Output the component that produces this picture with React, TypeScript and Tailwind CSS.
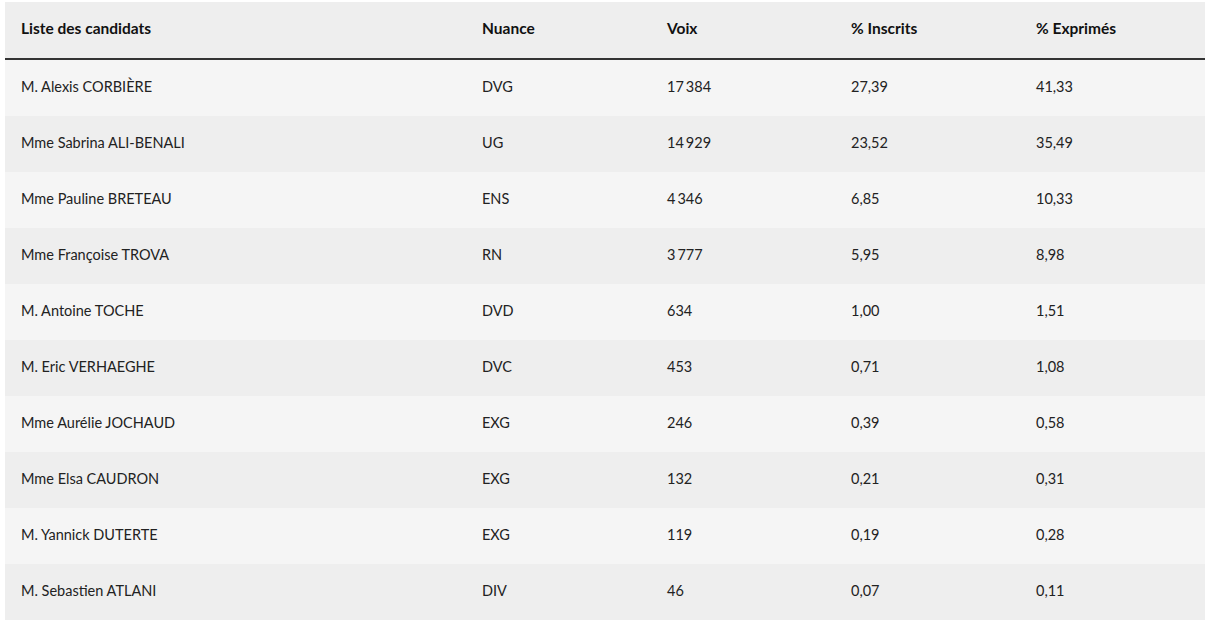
const rows = [
  ['M. Alexis CORBIÈRE', 'DVG', ['17', '384'], '27,39', '41,33'],
  ['Mme Sabrina ALI-BENALI', 'UG', ['14', '929'], '23,52', '35,49'],
  ['Mme Pauline BRETEAU', 'ENS', ['4', '346'], '6,85', '10,33'],
  ['Mme Françoise TROVA', 'RN', ['3', '777'], '5,95', '8,98'],
  ['M. Antoine TOCHE', 'DVD', ['634'], '1,00', '1,51'],
  ['M. Eric VERHAEGHE', 'DVC', ['453'], '0,71', '1,08'],
  ['Mme Aurélie JOCHAUD', 'EXG', ['246'], '0,39', '0,58'],
  ['Mme Elsa CAUDRON', 'EXG', ['132'], '0,21', '0,31'],
  ['M. Yannick DUTERTE', 'EXG', ['119'], '0,19', '0,28'],
  ['M. Sebastien ATLANI', 'DIV', ['46'], '0,07', '0,11'],
] as const

const headers = ['Liste des candidats', 'Nuance', 'Voix', '% Inscrits', '% Exprimés']

const cols = 'grid grid-cols-[461px_185px_184px_185px_185px]'

// thousands separator is a narrow space in the source
function Votes({ parts }: { parts: readonly string[] }) {
  if (parts.length === 1) return <>{parts[0]}</>
  return (
    <>
      {parts[0]}
      <span className="ml-[2px]">{parts[1]}</span>
    </>
  )
}

export default function App() {
  return (
    <div className="min-h-screen bg-white px-[5px] pt-[2px] font-['Lato',sans-serif] text-[14.5px] text-[#222]">
      <div className="w-[1200px]">
        <div className={`${cols} h-[58px] items-center border-b-2 border-[#333] bg-[#eeeeee] pb-[2px] text-[15.5px] font-bold text-[#111]`}>
          {headers.map((h) => (
            <div key={h} className="px-4">
              {h}
            </div>
          ))}
        </div>
        {rows.map((r, i) => (
          <div
            key={r[0]}
            className={`${cols} h-[56px] items-center pb-[2px] ${i % 2 === 0 ? 'bg-[#f5f5f5]' : 'bg-[#eeeeee]'}`}
          >
            <div className="px-4">{r[0]}</div>
            <div className="px-4">{r[1]}</div>
            <div className="px-4">
              <Votes parts={r[2]} />
            </div>
            <div className="px-4">{r[3]}</div>
            <div className="px-4">{r[4]}</div>
          </div>
        ))}
      </div>
    </div>
  )
}
